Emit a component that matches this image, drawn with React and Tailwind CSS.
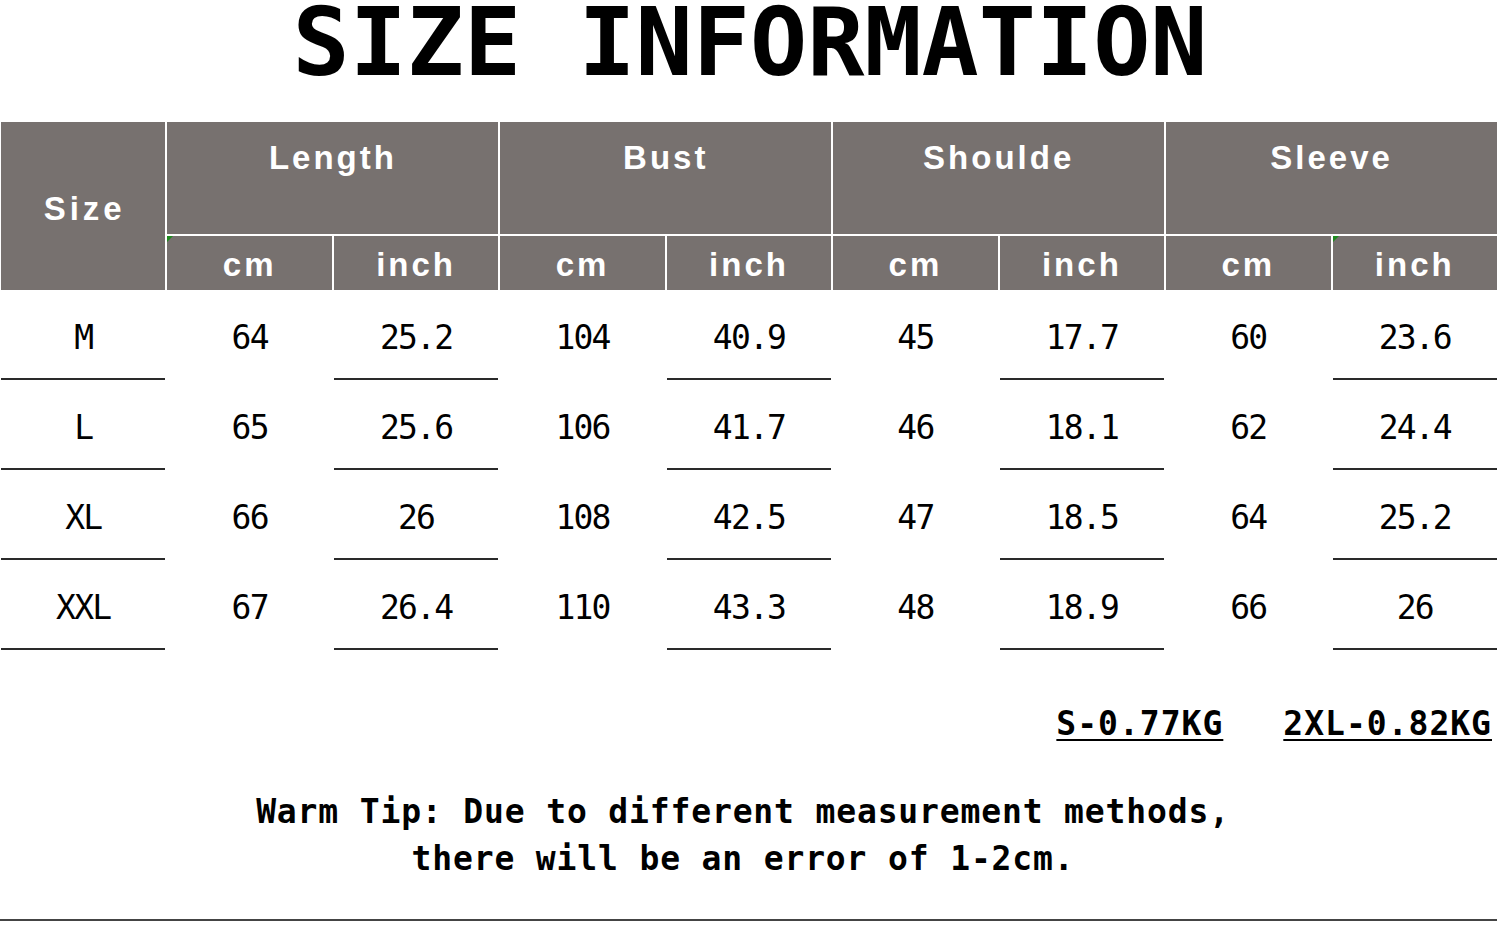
import React from 'react';

const groups = ['Length', 'Bust', 'Shoulde', 'Sleeve'];

const rows = [
  ['M', '64', '25.2', '104', '40.9', '45', '17.7', '60', '23.6'],
  ['L', '65', '25.6', '106', '41.7', '46', '18.1', '62', '24.4'],
  ['XL', '66', '26', '108', '42.5', '47', '18.5', '64', '25.2'],
  ['XXL', '67', '26.4', '110', '43.3', '48', '18.9', '66', '26'],
];

const mono = { fontFamily: '"DejaVu Sans Mono", "Liberation Mono", monospace' };
const sans = { fontFamily: '"Liberation Sans", Arial, sans-serif' };

// inch columns and the size column get the underline
const lined = [true, false, true, false, true, false, true, false, true];

function Corner() {
  return (
    <span className="absolute left-0 top-0 w-0 h-0 border-t-[6px] border-r-[6px] border-t-[#1f8a1f] border-r-transparent" />
  );
}

export default function App() {
  return (
    <div className="w-[1500px] h-[925px] bg-white overflow-hidden relative">
      {/* Title */}
      <h1
        className="text-center font-bold text-black text-[95px] leading-[84px]"
        style={mono}
      >
        SIZE INFORMATION
      </h1>

      {/* Table */}
      <div className="mt-[38px] ml-[1px] w-[1496px]">
        <div
          className="grid grid-cols-9 gap-x-[2px] gap-y-[2px] grid-rows-[112px_54px] text-white font-bold"
          style={sans}
        >
          <div className="row-span-2 bg-[#77716f] flex items-center justify-center pt-[5px] pl-[3px] text-[33px] tracking-[4px]">
            Size
          </div>
          {groups.map((g) => (
            <div
              key={g}
              className="col-span-2 bg-[#77716f] flex justify-center pt-[16px] text-[33px] tracking-[3px] leading-[40px]"
            >
              {g}
            </div>
          ))}
          {groups.map((g, i) => (
            <React.Fragment key={g + 'sub'}>
              <div className="relative bg-[#77716f] flex items-center justify-center pt-[4px] text-[33px] tracking-[3px]">
                {i === 0 && <Corner />}
                cm
              </div>
              <div className="relative bg-[#77716f] flex items-center justify-center pt-[4px] text-[33px] tracking-[3px]">
                {i === 3 && <Corner />}
                inch
              </div>
            </React.Fragment>
          ))}
        </div>

        <div className="grid grid-cols-9 gap-x-[2px] text-black" style={mono}>
          {rows.map((r) =>
            r.map((v, j) => (
              <div
                key={r[0] + j}
                className={`h-[90px] flex items-center justify-center pt-[8px] text-[33px] tracking-[-1.8px] ${
                  lined[j] ? 'border-b-2 border-[#2a2a2a]' : 'border-b-2 border-transparent'
                }`}
              >
                {v}
              </div>
            ))
          )}
        </div>
      </div>

      {/* Weights */}
      <div
        className="flex justify-end gap-[60px] pr-[8px] mt-[54px] font-bold text-[33px] tracking-[1px] leading-[40px] text-black"
        style={mono}
      >
        <span className="underline decoration-2 underline-offset-[4px]">S-0.77KG</span>
        <span className="underline decoration-2 underline-offset-[4px]">2XL-0.82KG</span>
      </div>

      {/* Warm tip */}
      <div
        className="mt-[44px] text-center font-bold text-[33px] tracking-[0.85px] leading-[47px] text-black pr-[14px]"
        style={mono}
      >
        <p>Warm Tip: Due to different measurement methods,</p>
        <p>there will be an error of 1-2cm.</p>
      </div>

      {/* Bottom rule */}
      <div className="absolute left-0 top-[919px] w-[1497px] h-[2px] bg-[#444]" />
    </div>
  );
}
